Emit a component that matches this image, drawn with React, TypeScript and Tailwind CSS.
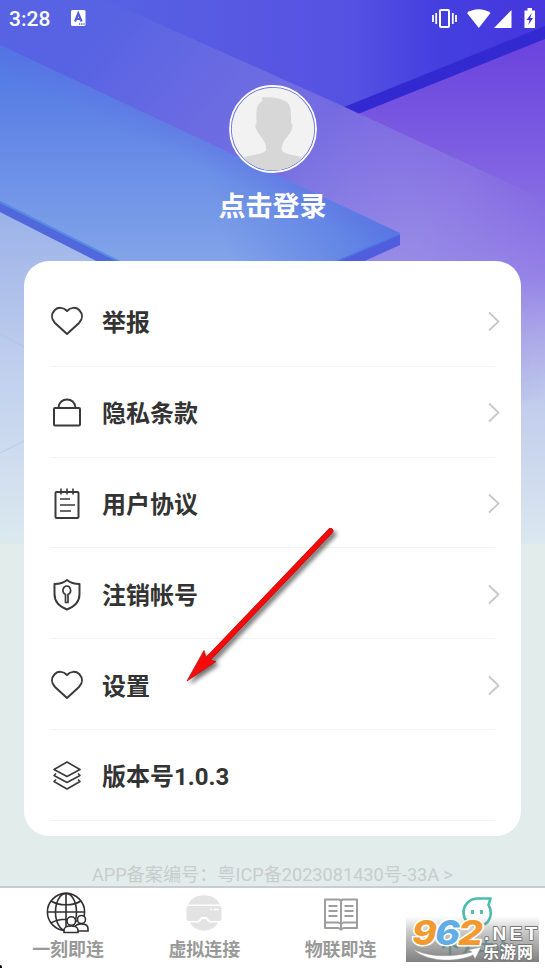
import type { ReactNode } from 'react';

/* Décor de fond : plaques en perspective */
function Backdrop() {
  return (
    <svg className="absolute inset-x-0 top-0 h-[544px] w-full" viewBox="0 0 545 544" preserveAspectRatio="none" aria-hidden="true">
      <defs>
        <linearGradient id="sky" x1="0" y1="0" x2="545" y2="0" gradientUnits="userSpaceOnUse">
          <stop offset="0" stopColor="#4f67e3" />
          <stop offset="0.25" stopColor="#5660e3" />
          <stop offset="0.45" stopColor="#5858e2" />
          <stop offset="0.65" stopColor="#5551e2" />
          <stop offset="0.8" stopColor="#443fdf" />
          <stop offset="1" stopColor="#4636de" />
        </linearGradient>
        <linearGradient id="violet" x1="430" y1="50" x2="430" y2="544" gradientUnits="userSpaceOnUse">
          <stop offset="0" stopColor="#6c45de" />
          <stop offset="0.25" stopColor="#8164e2" />
          <stop offset="0.46" stopColor="#9583e7" />
          <stop offset="0.58" stopColor="#ada9e9" />
          <stop offset="0.72" stopColor="#c1cdec" />
          <stop offset="1" stopColor="#dbe8ef" />
        </linearGradient>
        <linearGradient id="ribbon" x1="110" y1="20" x2="390" y2="270" gradientUnits="userSpaceOnUse">
          <stop offset="0" stopColor="#5763e3" />
          <stop offset="0.3" stopColor="#686ae2" />
          <stop offset="0.6" stopColor="#776ee1" />
          <stop offset="1" stopColor="#9b95e6" />
        </linearGradient>
        <linearGradient id="ribbonFade" x1="300" y1="0" x2="545" y2="0" gradientUnits="userSpaceOnUse">
          <stop offset="0" stopColor="white" />
          <stop offset="1" stopColor="black" />
        </linearGradient>
        <mask id="fade">
          <rect width="545" height="544" fill="url(#ribbonFade)" />
        </mask>
        <linearGradient id="plate" x1="0" y1="45" x2="0" y2="270" gradientUnits="userSpaceOnUse">
          <stop offset="0" stopColor="#4e76e4" />
          <stop offset="0.45" stopColor="#668ae6" />
          <stop offset="1" stopColor="#84a6e9" />
        </linearGradient>
        <linearGradient id="plateEnd" x1="180" y1="260" x2="400" y2="200" gradientUnits="userSpaceOnUse">
          <stop offset="0.2" stopColor="#5677e4" stopOpacity="0" />
          <stop offset="1" stopColor="#5477e3" />
        </linearGradient>
        <linearGradient id="plateEdge" x1="170" y1="122" x2="158" y2="148" gradientUnits="userSpaceOnUse">
          <stop offset="0" stopColor="#5f6ee3" stopOpacity="0.4" />
          <stop offset="1" stopColor="#5f6ee3" stopOpacity="0" />
        </linearGradient>
        <linearGradient id="ground" x1="0" y1="210" x2="0" y2="544" gradientUnits="userSpaceOnUse">
          <stop offset="0" stopColor="#9bb1e8" />
          <stop offset="0.45" stopColor="#bfceed" />
          <stop offset="1" stopColor="#dbe9ef" />
        </linearGradient>
      </defs>
      <rect width="545" height="544" fill="url(#violet)" />
      <path d="M0 0H545V30L348 110L200 70L0 60Z" fill="url(#sky)" />
      <path d="M545 26L344 107L358 114L545 39Z" fill="#3329d1" />
      <path d="M0 0H106L345 107L545 200V400H0Z" fill="url(#ribbon)" mask="url(#fade)" />
      <path d="M0 200L140 272V544H0Z" fill="url(#ground)" />
      <path d="M0 45L400 233L315 272H130L0 203Z" fill="url(#plate)" />
      <path d="M0 45L400 233L315 272H130L0 203Z" fill="url(#plateEnd)" />
      <path d="M0 45L400 233L315 272H130L0 203Z" fill="url(#plateEdge)" />
      <path d="M0 201L140 272H118L0 212Z" fill="#5068db" />
      <path d="M0 202L140 272" stroke="#568be5" strokeWidth="2" />
      <path d="M400 234V245L340 272H315Z" fill="#505ddd" />
      <path d="M400 234L315 271" stroke="#4d73e3" strokeWidth="1.5" />
      <path d="M0 334L24 347M0 453L24 441M521 382L545 371" stroke="#a9bde3" strokeOpacity="0.5" />
    </svg>
  );
}

function StatusBar() {
  return (
    <header className="flex h-9 items-center justify-between pl-[9px] pr-[9px] text-white">
      <div className="flex items-center">
        <span className="w-[62px] pt-[2px] font-['Roboto'] text-[21px] leading-none font-medium">3:28</span>
        <svg className="h-4 w-[15px]" viewBox="0 0 15 16" aria-hidden="true">
          <rect width="14.5" height="16" rx="1.5" fill="white" />
          <path d="M4 11.5L7.3 3.5L10.6 11.5M5 9H9.6" fill="none" stroke="#4d61dc" strokeWidth="2.2" />
          <path d="M8 14h1.3M10.2 14h1.3M12.4 14h1.3" stroke="#4d61dc" strokeWidth="1.5" />
        </svg>
      </div>
      <svg className="h-6 w-[105px]" viewBox="0 0 105 24" fill="white" aria-hidden="true">
        <rect x="9" y="4" width="9" height="17" rx="1" fill="none" stroke="white" strokeWidth="2" />
        <path d="M2 9v7M5.2 7v11M21.8 7v11M25 9v7" stroke="white" strokeWidth="1.8" />
        <path d="M36 7C42 2 53 2 59.5 7L47.8 22Z" />
        <path d="M63 22L80.5 4V22Z" />
        <path d="M93.5 4.5h3v-2.5h4.5v2.5h3v17.5h-10.5Z" />
        <path d="M100.8 7L95.5 14H98.5L97.3 19L102 12H99.2Z" fill="#3934cd" />
      </svg>
    </header>
  );
}

function Avatar() {
  return (
    <svg className="h-[88px] w-[88px]" viewBox="0 0 88 88" aria-hidden="true">
      <clipPath id="face"><circle cx="44" cy="44" r="41.3" /></clipPath>
      <circle cx="44" cy="44" r="43" fill="#5d6bdf" stroke="white" strokeWidth="1.8" />
      <circle cx="44" cy="44" r="41.3" fill="#f2f2f2" />
      <path clipPath="url(#face)" d="M33 12.5C42 11.5 50 12.5 57 16.5C61 19 62 22 62.3 38C64 39 64 44 61 48C57.5 53 53 57 52.5 64C53 68 59 69 66 70.5C72 71.5 75 73 78 76V88H10V76C13 73 16 71.5 22 70.5C30 69 37 68 37.3 64C37 57 32 52 29 47.5C26 43.5 26 39 27.5 38C27 24 27.5 19 33.5 16Z" fill="#d7d7d7" />
    </svg>
  );
}

const HeartIcon = (
  <path d="M17 6C13.5 2 8 2 4.8 5C1 9 1.2 14 5 18L17 29L29 18C32.8 14 33 9 29.2 5C26 2 20.5 2 17 6Z" />
);

const LockIcon = (
  <>
    <rect x="4" y="12" width="26" height="17.5" rx="1" />
    <path d="M8.5 12C9 .5 25 .5 25.5 12" />
  </>
);

const NoteIcon = (
  <>
    <rect x="5.5" y="5" width="23" height="26" rx="1" />
    <path d="M11 1.5v6M17 1.5v6M23 1.5v6M10 12h10M10 18h15M10 24h11" strokeWidth="1.6" />
  </>
);

const ShieldIcon = (
  <>
    <path d="M17 2C13 5.5 9 6 4.5 6V16C4.5 24 9 28.5 17 31.5C25 28.5 29.5 24 29.5 16V6C25 6 21 5.5 17 2Z" />
    <path d="M15.5 16.5V24.5H18V16.5C22.5 14 20.5 8 16.8 8C13 8 11 14 15.5 16.5Z" strokeWidth="1.7" />
  </>
);

const LayersIcon = (
  <g strokeWidth="1.6">
    <path d="M17 3L30 10.5L17 17.5L4 10.5Z" />
    <path d="M6 14.5L4 16.5L17 23.5L30 16.5L28 14.5" />
    <path d="M6 20.5L4 22.5L17 30L30 22.5L28 20.5" />
  </g>
);

type Item = { label: string; icon: ReactNode; arrow: boolean };

const items: Item[] = [
  { label: '举报', icon: HeartIcon, arrow: true },
  { label: '隐私条款', icon: LockIcon, arrow: true },
  { label: '用户协议', icon: NoteIcon, arrow: true },
  { label: '注销帐号', icon: ShieldIcon, arrow: true },
  { label: '设置', icon: HeartIcon, arrow: true },
  { label: '版本号1.0.3', icon: LayersIcon, arrow: false },
];

function MenuRow({ label, icon, arrow }: Item) {
  return (
    <li className="flex h-[90.8px] items-center border-b border-[#f2f2f2] pt-[3px]">
      <svg className="h-[34px] w-[34px] shrink-0" viewBox="0 0 34 34" fill="none" stroke="#3a3a3a" strokeWidth="2" strokeLinejoin="round" aria-hidden="true">
        {icon}
      </svg>
      <span className="ml-[18px] flex-1 pt-[2px] text-2xl leading-none font-bold text-[#333]">{label}</span>
      {arrow && (
        <svg className="-mr-[5px] h-[22px] w-3" viewBox="0 0 12 22" fill="none" stroke="#c8c8c8" strokeWidth="1.8" aria-hidden="true">
          <path d="M1 1.5L10.5 10.5L1 19.5" />
        </svg>
      )}
    </li>
  );
}

function GlobeIcon() {
  return (
    <svg className="h-[44px] w-[44px]" viewBox="0 0 44 44" fill="none" stroke="#303030" strokeWidth="1.6" aria-hidden="true">
      <circle cx="20" cy="21" r="18.6" />
      <ellipse cx="20" cy="21" rx="10.5" ry="18.6" />
      <path d="M20 2V40M1 21H39M5 10C13 15 27 15 35 10M5 32C13 27 27 27 35 32" />
      <g fill="white">
        <path d="M29 37.5V36.5C29 31.5 42 31.5 42 37.5V40H29Z" />
        <circle cx="35.5" cy="28.5" r="4" />
        <path d="M18 41.5V39C18 33.5 32 33.5 32 39V41.5Z" />
        <circle cx="25.3" cy="30" r="4.3" />
      </g>
    </svg>
  );
}

function HeadsetIcon() {
  return (
    <svg className="h-[44px] w-[44px]" viewBox="0 0 44 44" fill="#e3e3e3" aria-hidden="true">
      <path d="M6 13.5C11 1 33 1 38 13.5Z" />
      <path d="M6.5 15H37.5Q39.5 15 39.5 17V28Q39.5 30 37.5 30H28L24.5 26H19.5L16 30H6.5Q4.5 30 4.5 28V17Q4.5 15 6.5 15Z" />
      <path d="M8 31.5H17L20 28H24L27 31.5H36C30 42.5 14 42.5 8 31.5Z" />
      <path d="M28 18.5h2M31.5 18.5h5" stroke="white" strokeWidth="1.5" />
    </svg>
  );
}

function BookIcon() {
  return (
    <svg className="h-[44px] w-[44px]" viewBox="0 0 44 44" fill="none" stroke="#9d9d9d" strokeWidth="2" strokeLinejoin="round" aria-hidden="true">
      <path d="M22 9.5L20 8.5H6V37H19.5L22 38.5L24.5 37H38V8.5H24ZM22 9.5V39.5M6 31.5H19.5L22 33L24.5 31.5H38" />
      <path d="M9.5 15h9M9.5 20h9M9.5 25h9M25.5 15h9M25.5 20h9M25.5 25h9" strokeWidth="1.8" />
    </svg>
  );
}

function MascotIcon() {
  return (
    <svg className="h-[44px] w-[44px]" viewBox="0 0 44 44" fill="none" stroke="#4cbcae" strokeWidth="2.6" strokeLinejoin="round" aria-hidden="true">
      <path d="M35 7.5H22C4 9 4 34 22 35C36 35 38 22 33.5 14L35.5 7.5Z" />
      <path d="M17.5 19v4M26.5 19v4" strokeWidth="2.8" />
    </svg>
  );
}

const tabs = [
  { label: '一刻即连', icon: <GlobeIcon />, color: 'text-[#999]' },
  { label: '虚拟连接', icon: <HeadsetIcon />, color: 'text-[#999]' },
  { label: '物联即连', icon: <BookIcon />, color: 'text-[#999]' },
  { label: '个人中心', icon: <MascotIcon />, color: 'text-[#4cbcae]' },
];

/* Tampon du site, posé par-dessus la barre d'onglets */
function Watermark() {
  return (
    <svg className="absolute right-[6px] bottom-[6px] h-[46px] w-[133px] overflow-visible" viewBox="0 0 133 46" aria-hidden="true">
      <defs>
        <linearGradient id="stamp" x1="0" y1="0" x2="0" y2="1">
          <stop offset="0" stopColor="#777" stopOpacity="0" />
          <stop offset="0.35" stopColor="#777" stopOpacity="0.4" />
          <stop offset="1" stopColor="#747474" stopOpacity="0.92" />
        </linearGradient>
      </defs>
      <rect width="133" height="46" fill="url(#stamp)" />
      <g fontFamily="Inter" fontSize="34" fontWeight="800" fontStyle="italic" stroke="white" strokeWidth="3" paintOrder="stroke" strokeLinejoin="round">
        <text x="6" y="29" textLength="25" lengthAdjust="spacingAndGlyphs" fill="#f29a2e">9</text>
        <text x="29" y="29" textLength="25" lengthAdjust="spacingAndGlyphs" fill="#61aee6">6</text>
        <text x="52" y="29" textLength="25" lengthAdjust="spacingAndGlyphs" fill="#f29a2e">2</text>
      </g>
      <path d="M7 33C23 42 50 41 66 36L62 34L75 31L69 43L67 39C50 47 20 46 7 33Z" fill="white" stroke="#999" strokeWidth="0.5" />
      <g fill="white" stroke="#777" strokeWidth="1.8" paintOrder="stroke" strokeLinejoin="round">
        <text x="78" y="23.5" fontFamily="Liberation Sans" fontSize="19" fontWeight="700" textLength="53" lengthAdjust="spacing">.NET</text>
        <text x="77" y="41.5" fontFamily="Noto Sans CJK SC" fontSize="16" fontWeight="700" textLength="50">乐游网</text>
      </g>
    </svg>
  );
}

function RedArrow() {
  return (
    <svg className="absolute top-[260px] left-[156px] h-[170px] w-[165px] drop-shadow-[3px_3px_2px_rgba(0,0,0,0.55)]" viewBox="180 521 165 170" aria-hidden="true">
      <path d="M330.5 531L208 659" stroke="#a51212" strokeWidth="5.8" strokeLinecap="round" />
      <path d="M187 681L204 650.5L206 657L209 660L216 661.5Z" fill="#f40b0b" stroke="#c51010" strokeWidth="0.8" />
      <path d="M330.5 531L203 664" stroke="#f80909" strokeWidth="4.8" strokeLinecap="round" />
    </svg>
  );
}

export default function App() {
  return (
    <main className="relative flex h-[968px] w-full flex-col overflow-hidden bg-[#e2ecea] font-['Roboto','Noto_Sans_CJK_SC',sans-serif]">
      <Backdrop />

      <div className="relative flex flex-1 flex-col">
        <StatusBar />

        {/* Profil */}
        <section className="flex flex-col items-center pt-[49px]">
          <Avatar />
          <h1 className="mt-[18px] text-[27px] leading-8 font-bold text-white">点击登录</h1>
        </section>

        {/* Menu */}
        <section className="relative mx-6 mt-[38px] h-[575px] rounded-[25px] bg-white px-[26px] pt-[15px]">
          <ul>
            {items.map((item) => (
              <MenuRow key={item.label} {...item} />
            ))}
          </ul>
          <RedArrow />
        </section>

        <p className="mt-7 text-center text-[18.15px] leading-[22px] text-[#c8cccb]">
          APP备案编号：粤ICP备2023081430号-33A &gt;
        </p>
      </div>

      {/* Onglets */}
      <nav className="relative grid h-[82px] shrink-0 grid-cols-4 border-t-2 border-[#c9cdcc] bg-white">
        {tabs.map((tab) => (
          <div key={tab.label} className="flex flex-col items-center pt-[3px]">
            {tab.icon}
            <span className={`mt-[3px] text-[18px] leading-6 font-bold ${tab.color}`}>{tab.label}</span>
          </div>
        ))}
        <Watermark />
        <span className="absolute bottom-0 left-0 h-[3px] w-0.5 rounded-tr-full bg-black" />
      </nav>
    </main>
  );
}
